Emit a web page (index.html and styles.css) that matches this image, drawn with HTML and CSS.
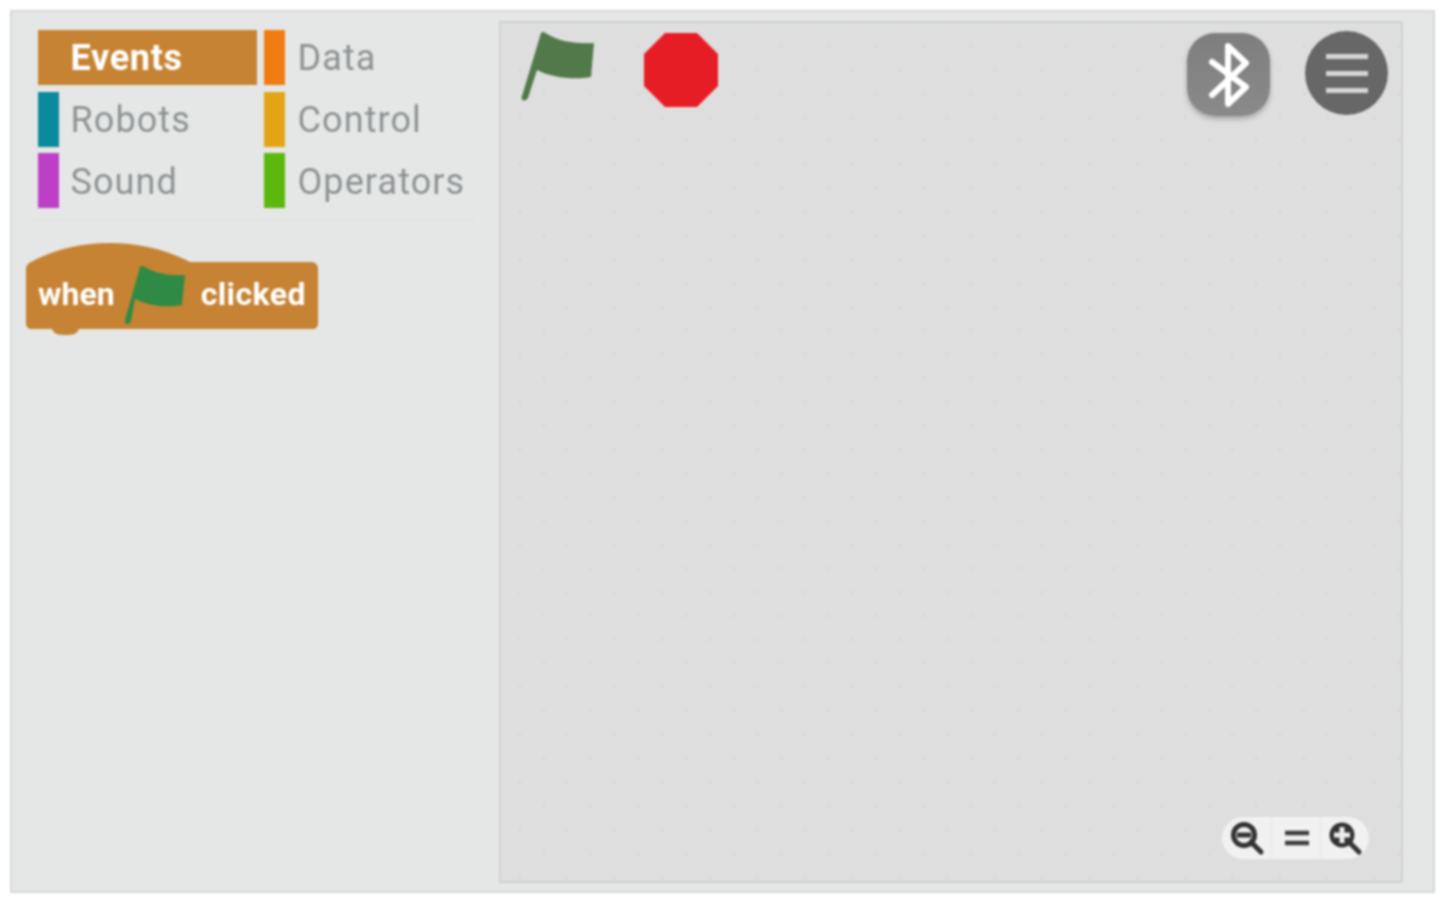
FILE: index.html
```html
<!DOCTYPE html>
<html lang="en">
<head>
<meta charset="utf-8">
<title>Blocks editor</title>
<link rel="stylesheet" href="styles.css">
</head>
<body>
<main class="frame">
  <aside class="palette">
    <nav class="categories">
      <div class="cat active"><span class="swatch swatch-events"></span><span class="label">Events</span></div>
      <div class="cat"><span class="swatch swatch-data"></span><span class="label">Data</span></div>
      <div class="cat"><span class="swatch swatch-robots"></span><span class="label">Robots</span></div>
      <div class="cat"><span class="swatch swatch-control"></span><span class="label">Control</span></div>
      <div class="cat"><span class="swatch swatch-sound"></span><span class="label">Sound</span></div>
      <div class="cat"><span class="swatch swatch-operators"></span><span class="label">Operators</span></div>
    </nav>
    <div class="divider"></div>
    <div class="block">
      <svg class="block-shape" width="294" height="94" viewBox="0 0 294 94">
        <path fill="#c68333" d="M1 28 C1 24 2 23 4 21 C28 8 55 1 85 1 C115 1 142 8 165 20 L286 20 C291 20 293 23 293 27 L293 81 C293 85 291 87 287 87 L54 87 C52 92 48 93 41 93 C33 93 29 92 27 87 L7 87 C3 87 1 85 1 81 Z"/>
      </svg>
      <span class="block-text">when</span>
      <svg class="block-flag" width="64" height="62" viewBox="0 0 64 62">
        <path fill="#2f8a45" d="M15 1 C17 -1 18 0 20 1 C30 7 44 10 60 9 L57 39 C42 42 24 40 10 33 L6 55 C4 60 -1 59 0 54 Z"/>
      </svg>
      <span class="block-text block-text-wide">clicked</span>
    </div>
  </aside>
  <section class="stage">
    <div class="stage-top">
      <div class="run-controls">
        <svg class="flag" width="76" height="72" viewBox="0 0 76 72">
          <path fill="#52794a" d="M21 3 C23 1 24 2 27 4 C40 12 58 14 74 13 L71 47 C55 50 32 48 17 40 L8 68 C6 72 0 71 2 66 Z"/>
        </svg>
        <svg class="stop" width="74" height="74" viewBox="0 0 74 74">
          <polygon fill="#e71d25" points="21,0 53,0 74,21 74,53 53,74 21,74 0,53 0,21"/>
        </svg>
      </div>
      <div class="tools">
        <div class="bt-button">
          <svg width="42" height="66" viewBox="0 0 42 66">
            <path fill="none" stroke="#fff" stroke-width="6" stroke-linejoin="round" stroke-linecap="round" d="M4 20 L38 45 L20 62 L20 4 L38 21 L4 53"/>
          </svg>
        </div>
        <div class="menu-button">
          <span class="bar"></span><span class="bar"></span><span class="bar"></span>
        </div>
      </div>
    </div>
    <div class="zoom">
      <div class="zoom-cell">
        <svg class="zoom-icon" width="34" height="34" viewBox="0 0 34 34">
          <circle cx="13" cy="13" r="10.5" fill="none" stroke="#333" stroke-width="5"/>
          <path stroke="#333" stroke-width="5" stroke-linecap="round" d="M20 20 L30 30"/>
          <path stroke="#333" stroke-width="5" d="M6 13 H20"/>
        </svg>
      </div>
      <div class="zoom-cell">
        <svg class="zoom-icon" width="26" height="20" viewBox="0 0 26 20">
          <path stroke="#3d3d3d" stroke-width="4.5" d="M1 4 H25 M1 14 H25"/>
        </svg>
      </div>
      <div class="zoom-cell">
        <svg class="zoom-icon" width="34" height="34" viewBox="0 0 34 34">
          <circle cx="13" cy="13" r="12.5" fill="#333"/>
          <path stroke="#333" stroke-width="5" stroke-linecap="round" d="M20 20 L30 30"/>
          <path stroke="#ececec" stroke-width="5" d="M5 13 H21 M13 5 V21"/>
        </svg>
      </div>
    </div>
  </section>
</main>
</body>
</html>
```

FILE: styles.css
```css
* { box-sizing: border-box; }
html, body { margin: 0; height: 100%; background: #fff; }
body { font-family: Roboto, "Liberation Sans", sans-serif; overflow: hidden; }

.frame {
  width: 1425px;
  height: 883px;
  margin: 10px 0 0 10px;
  display: flex;
  background: #e5e7e6;
  border: 2px solid #d6d8d7;
  padding: 9px 30px 8px 0;
  filter: blur(0.9px);
}

.palette {
  width: 487px;
  flex: none;
  display: flex;
  flex-direction: column;
}

.categories {
  margin: 9px 0 0 26px;
  display: grid;
  grid-template-columns: 219px 1fr;
  grid-auto-rows: 55px;
  column-gap: 7px;
  row-gap: 6.5px;
}

.cat {
  position: relative;
  display: flex;
  align-items: center;
  padding-left: 33.5px;
  font-size: 36px;
  letter-spacing: 1.1px;
  color: #8d9293;
}
.cat:nth-child(odd) { padding-left: 32.5px; }
.cat:nth-child(n+3) { padding-top: 2px; }
.swatch { position: absolute; left: 0; top: 0; bottom: 0; width: 21px; }
.label { position: relative; }
.active { color: #fff; font-weight: 700; letter-spacing: 0.7px; }
.active .swatch { width: 100%; }
.swatch-events { background: #c68333; }
.swatch-data { background: #f27c14; }
.swatch-robots { background: #0b8a9d; }
.swatch-control { background: #e3a514; }
.swatch-sound { background: #bd3fc6; }
.swatch-operators { background: #5db80d; }

.divider { height: 1px; background: #dcdedd; margin: 12px 25px 0 20px; }

.block {
  position: relative;
  width: 294px;
  height: 94px;
  margin: 21px 0 0 13px;
  padding: 20px 0 10px 13px;
  display: flex;
  align-items: center;
  color: #fff;
  font-size: 32px;
  font-weight: 700;
}
.block-shape { position: absolute; left: 0; top: 0; }
.block-text { position: relative; }
.block-text-wide { letter-spacing: 0.4px; }
.block-flag { position: relative; margin: 6px 12px 0 10px; flex: none; }

.stage {
  flex: 1;
  display: flex;
  flex-direction: column;
  justify-content: space-between;
  background-color: #dedede;
  background-image:
    radial-gradient(circle, #d2d2d2 1px, transparent 1.5px),
    radial-gradient(circle, #d2d2d2 1px, transparent 1.5px);
  background-size: 47.5px 47.5px;
  background-position: -5px 23px, 19px -1px;
  border: 2px solid #d0d2d1;
  padding: 7px 13px 22px 19px;
}

.stage-top { display: flex; justify-content: space-between; }
.run-controls { display: flex; gap: 48px; align-items: flex-start; }
.stop { margin-top: 3px; }
.tools { display: flex; gap: 35px; align-items: flex-start; }

.bt-button {
  width: 83px;
  height: 83px;
  margin-top: 3px;
  border-radius: 28px;
  background: linear-gradient(#7e7e7e, #8a8a8a);
  box-shadow: 0 3px 5px #a6a6a6;
  display: flex;
  align-items: center;
  justify-content: center;
}

.menu-button {
  width: 83px;
  height: 84px;
  margin-top: 1px;
  border-radius: 50%;
  background: #676767;
  display: flex;
  flex-direction: column;
  align-items: center;
  justify-content: center;
  gap: 12px;
}
.bar { width: 42px; height: 5px; background: #d5d5d5; }

.zoom {
  align-self: flex-end;
  display: flex;
  margin-right: 19px;
  height: 42px;
  border-radius: 21px;
  background: #f1f1f1;
}
.zoom-cell {
  width: 49px;
  display: flex;
  align-items: center;
  justify-content: center;
  border-left: 1px solid #e4e4e4;
  padding: 2px 0 0 2px;
}
.zoom-cell:first-child { border-left: 0; }
```
